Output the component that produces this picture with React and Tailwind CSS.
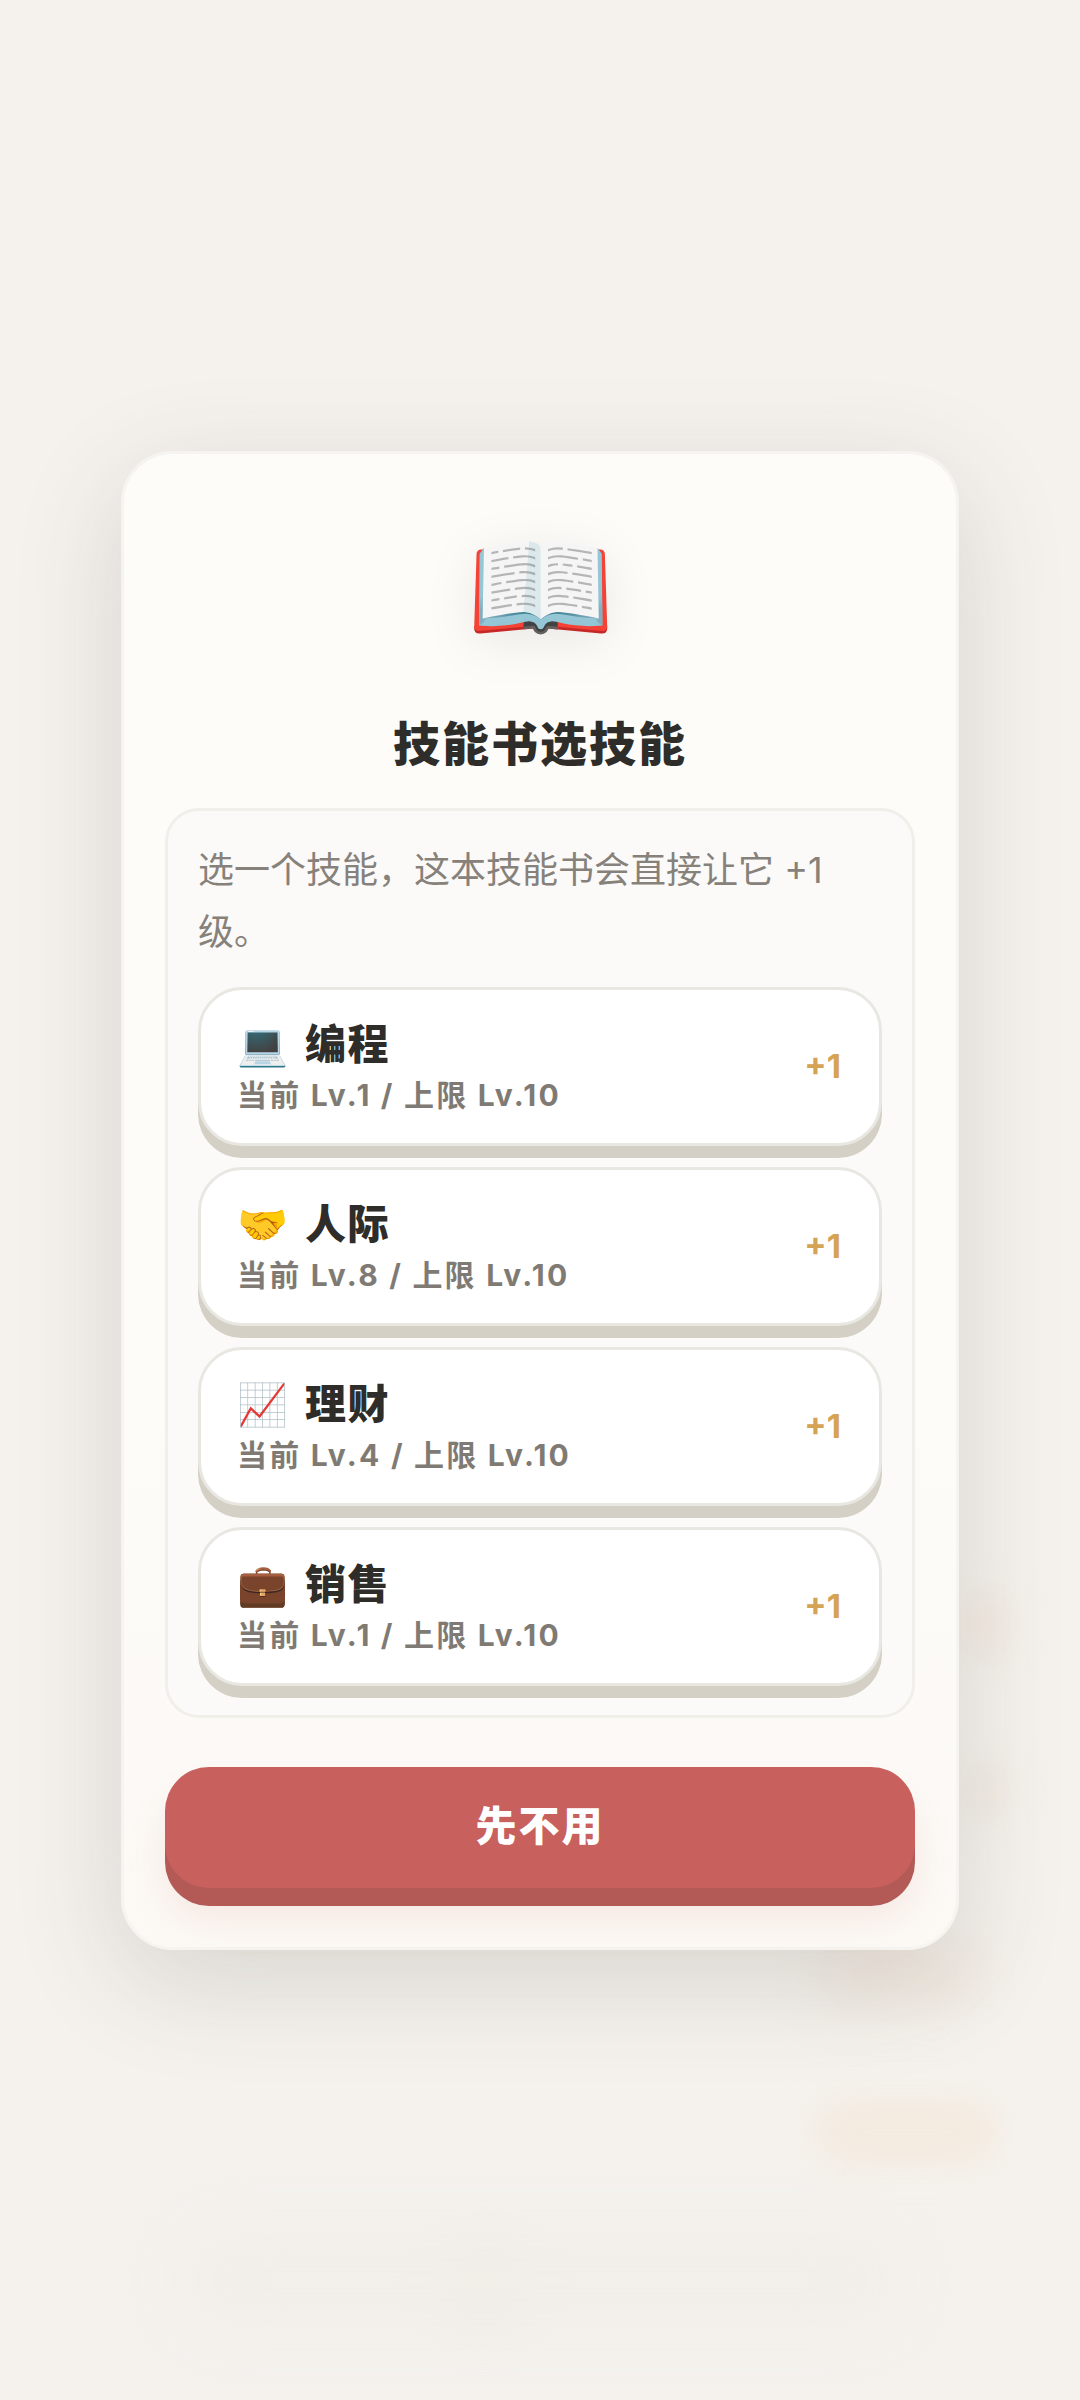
const skills = [
  { icon: "💻", name: "编程", level: 1 },
  { icon: "🤝", name: "人际", level: 8 },
  { icon: "📈", name: "理财", level: 4 },
  { icon: "💼", name: "销售", level: 1 },
];

function SkillRow({ icon, name, level }) {
  return (
    <div className="flex h-[159px] items-center justify-between rounded-[44px] border-[3px] border-[#e9e7e2] bg-white pl-[36px] pr-[38px] pb-[1px] shadow-[0_12px_0_#d5d0c6]">
      <div className="flex flex-col">
        <div className="flex h-[54px] items-center gap-[17px] text-[41px] font-black leading-[54px] tracking-[1.5px] text-[#2f2d2a]">
          <span className="tracking-normal">{icon}</span>
          <span>{name}</span>
        </div>
        <div className="mt-[4px] text-[30px] font-bold leading-[40px] tracking-[2.2px] text-[#7f7b74]">
          当前 Lv.{level} / 上限 Lv.10
        </div>
      </div>
      <div className="text-[33px] font-bold leading-[40px] text-[#d4a355]">+1</div>
    </div>
  );
}

export default function App() {
  return (
    <div className="relative flex h-[2400px] items-center justify-center overflow-hidden bg-[#f5f2ee] font-['Inter','Noto_Sans_CJK_SC',sans-serif]">
      <div className="absolute left-[812px] top-[2097px] h-[70px] w-[188px] rounded-[30px] bg-[#f3e9dc] opacity-80 blur-[18px]" />
      <div className="absolute left-[820px] top-[1940px] h-[70px] w-[170px] rounded-[30px] bg-[#ecdfd2] opacity-50 blur-[28px]" />
      <div className="absolute left-[960px] top-[1590px] h-[70px] w-[50px] rounded-[20px] bg-[#f0e4d8] opacity-60 blur-[18px]" />
      <div className="absolute left-[960px] top-[1760px] h-[60px] w-[50px] rounded-[20px] bg-[#f0e6dc] opacity-60 blur-[18px]" />
      <div className="absolute left-[440px] top-[2240px] h-[90px] w-[90px] rounded-full bg-[#eeebe5] blur-[20px]" />
      <div className="absolute left-[180px] top-[2230px] h-[100px] w-[720px] rounded-[40px] bg-[#f1eee9] blur-[30px]" />

      <div className="relative flex h-[1499px] w-[838px] flex-col rounded-[52px] border-[3px] border-[#f6f4f0] bg-[linear-gradient(180deg,#fdfcf9_0%,#fdfcf9_60%,#fcf9f5_100%)] px-[41px] pt-[64px] shadow-[0_30px_110px_rgba(60,55,45,0.16)]">
        <div className="h-[136px] text-center text-[120px] leading-[136px] drop-shadow-[0_10px_24px_rgba(0,0,0,0.08)]">📖</div>
        <h1 className="mt-[60px] text-center text-[47px] font-black leading-[60px] tracking-[2px] text-[#2f2d2a]">技能书选技能</h1>

        <div className="mt-[34px] flex flex-col rounded-[34px] border-[3px] border-[#f1efea] bg-[#fbfaf8] px-[30px] pb-[29px] pt-[28px]">
          <p className="text-[36px] leading-[62px] text-[#86817a]">选一个技能，这本技能书会直接让它 +1 级。</p>
          <div className="mt-[24px] flex flex-col gap-[21px]">
            {skills.map((s) => (
              <SkillRow key={s.name} {...s} />
            ))}
          </div>
        </div>

        <button className="mt-[49px] flex h-[121px] w-full items-center justify-center rounded-[44px] bg-[#c8605e] text-[41px] font-black tracking-[2px] text-white shadow-[0_18px_0_#b35a57,0_30px_40px_rgba(200,96,94,0.12)]">
          先不用
        </button>
      </div>
    </div>
  );
}
